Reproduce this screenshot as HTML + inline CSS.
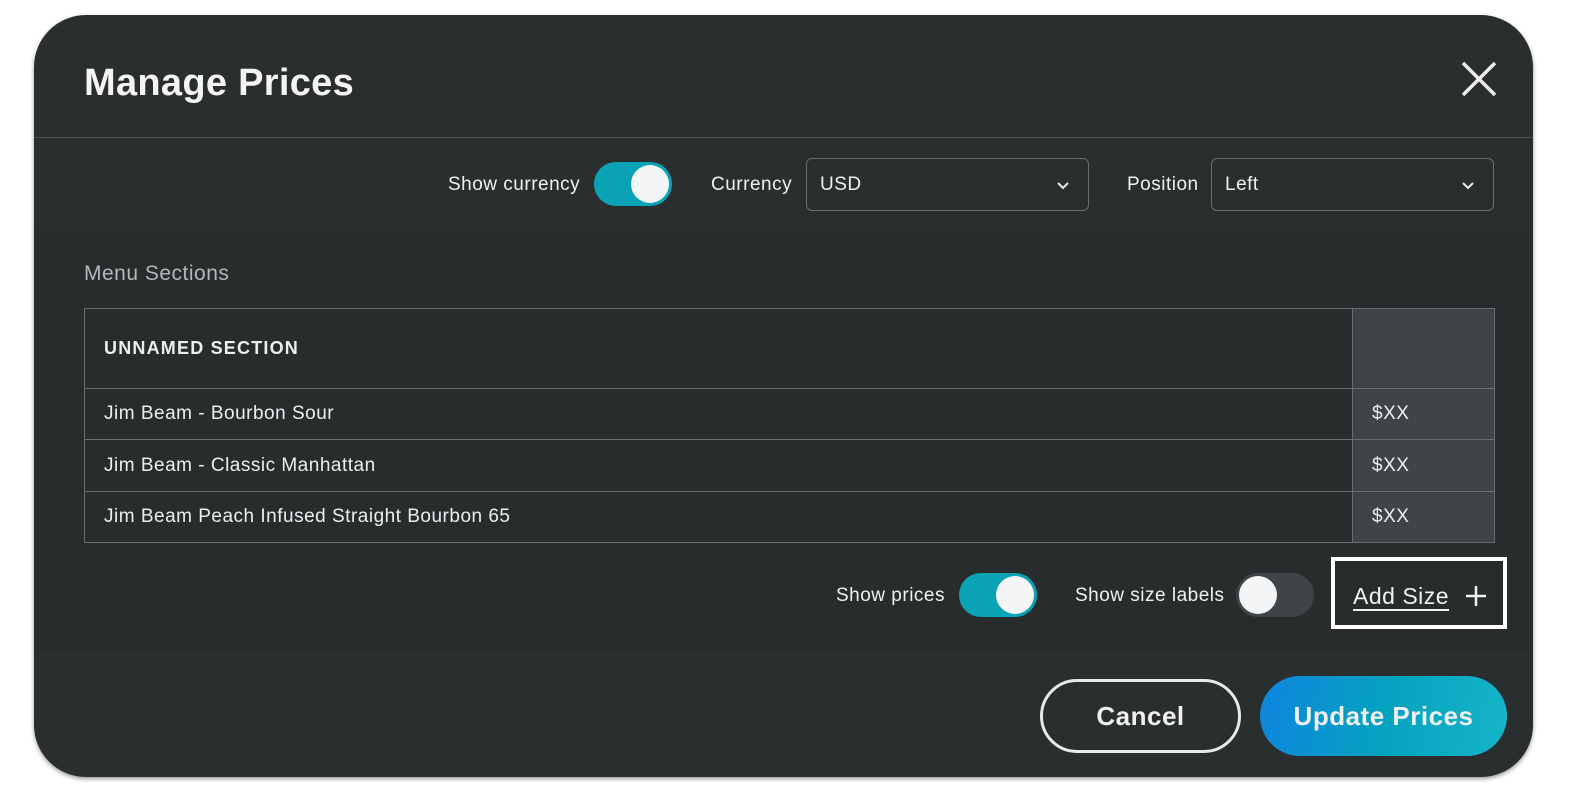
<!DOCTYPE html>
<html><head><style>
*{box-sizing:border-box;margin:0;padding:0}
body{width:1594px;height:804px;background:#fff;position:relative;overflow:hidden;font-family:"Liberation Sans",sans-serif;color:#f0f0f2}
.dlg{position:absolute;left:34px;top:15px;width:1499px;height:762px;background:#2a2e2f;border-radius:52px;overflow:hidden;box-shadow:0 2px 4px rgba(0,0,0,.4)}
.abs{position:absolute}
.hdr{left:0;top:0;width:100%;height:123px;border-bottom:1px solid #4c5052}
.tb{left:0;top:123px;width:100%;height:92px}
.body{left:0;top:215px;width:100%;height:422px;background:#282c2d}
.t{position:absolute;white-space:nowrap;letter-spacing:0.5px}
.sel{position:absolute;border:1px solid #6a6e70;border-radius:6px;height:53px;top:143px}
.tog{position:absolute;width:78px;height:44px;border-radius:22px}
.knob{position:absolute;width:38px;height:38px;border-radius:50%;background:#f4f5f7;top:3px}
table{position:absolute;left:50px;top:293px;border-collapse:collapse}
td{border:1px solid #6a6e70;font-size:19px;padding-left:19px;color:#eceef0;letter-spacing:0.5px}
td.p{background:#404447;width:142px}
</style></head><body>
<div class="dlg">
<div class="abs hdr"></div>
<div class="abs tb"></div>
<div class="abs body"></div>
<div class="t" style="left:50px;top:47px;font-size:38px;font-weight:bold;color:#f4f4f6;letter-spacing:0.3px">Manage Prices</div>
<svg class="abs" style="left:1427px;top:46px" width="36" height="36"><path d="M2 2L34 34M34 2L2 34" stroke="#f0f0f2" stroke-width="3.5"/></svg>
<div class="t" style="left:414px;top:159px;font-size:19px">Show currency</div>
<div class="tog" style="left:560px;top:147px;background:#0aa3b5"><div class="knob" style="left:37px"></div></div>
<div class="t" style="left:677px;top:159px;font-size:19px">Currency</div>
<div class="sel" style="left:772px;width:283px"><span class="t" style="left:13px;top:15px;font-size:19px">USD</span>
<svg class="abs" style="left:249px;top:22px" width="14" height="10"><path d="M2 2L7 7L12 2" stroke="#eee" stroke-width="2" fill="none"/></svg></div>
<div class="t" style="left:1093px;top:159px;font-size:19px">Position</div>
<div class="sel" style="left:1177px;width:283px"><span class="t" style="left:13px;top:15px;font-size:19px">Left</span>
<svg class="abs" style="left:249px;top:22px" width="14" height="10"><path d="M2 2L7 7L12 2" stroke="#eee" stroke-width="2" fill="none"/></svg></div>
<div class="t" style="left:50px;top:247px;font-size:21px;color:#b4b8ba">Menu Sections</div>
<table>
<tr style="height:80px"><td style="width:1268px;font-weight:bold;letter-spacing:1.2px;font-size:18px">UNNAMED SECTION</td><td class="p"></td></tr>
<tr style="height:51px"><td>Jim Beam - Bourbon Sour</td><td class="p">$XX</td></tr>
<tr style="height:52px"><td>Jim Beam - Classic Manhattan</td><td class="p">$XX</td></tr>
<tr style="height:51px"><td>Jim Beam Peach Infused Straight Bourbon 65</td><td class="p">$XX</td></tr>
</table>
<div class="t" style="left:802px;top:570px;font-size:19px">Show prices</div>
<div class="tog" style="left:925px;top:558px;background:#0aa3b5"><div class="knob" style="left:37px"></div></div>
<div class="t" style="left:1041px;top:570px;font-size:19px">Show size labels</div>
<div class="tog" style="left:1202px;top:558px;background:#404447"><div class="knob" style="left:3px"></div></div>
<div class="abs" style="left:1297px;top:542px;width:176px;height:72px;border:4px solid #fff"></div>
<div class="t" style="left:1319px;top:568px;font-size:23px;text-decoration:underline;text-underline-offset:5px">Add Size</div>
<svg class="abs" style="left:1431px;top:570px" width="22" height="22"><path d="M11 1V21M1 11H21" stroke="#f0f0f2" stroke-width="2.5"/></svg>
<div class="abs" style="left:1006px;top:664px;width:201px;height:74px;border:3px solid #e8e8ea;border-radius:37px"></div>
<div class="t" style="left:1006px;top:686px;width:201px;text-align:center;font-size:26px;font-weight:bold">Cancel</div>
<div class="abs" style="left:1226px;top:661px;width:247px;height:80px;border-radius:40px;background:linear-gradient(100deg,#0f85de,#05a2c0 50%,#17b5c8)"></div>
<div class="t" style="left:1226px;top:686px;width:247px;text-align:center;font-size:26px;font-weight:bold">Update Prices</div>
</div>
</body></html>
